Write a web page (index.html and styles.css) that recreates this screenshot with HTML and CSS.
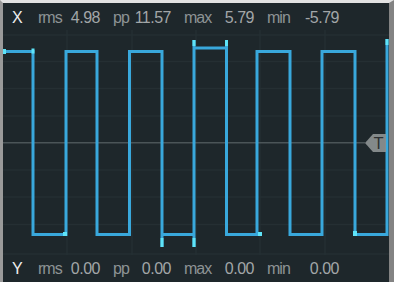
FILE: index.html
```html
<!DOCTYPE html>
<html lang="en">
<head>
    <meta charset="UTF-8">
    <meta name="viewport" content="width=device-width, initial-scale=1.0">
    <title>Scope</title>
    <link rel="stylesheet" href="styles.css">
</head>
<body>

    <div class="scope">
        <!-- X channel measurements -->
        <div class="stats">
            <span class="axis">X</span>
            <span class="label">rms</span><span class="value">4.98</span>
            <span class="label pad">pp</span><span class="value">11.57</span>
            <span class="label pad">max</span><span class="value">5.79</span>
            <span class="label pad">min</span><span class="value">-5.79</span>
        </div>

        <div class="plot">
            <svg width="386" height="225" viewBox="0 0 386 225">
                <g class="grid">
                    <line x1="64" y1="0" x2="64" y2="225"/>
                    <line x1="129" y1="0" x2="129" y2="225"/>
                    <line x1="193" y1="0" x2="193" y2="225"/>
                    <line x1="257" y1="0" x2="257" y2="225"/>
                    <line x1="322" y1="0" x2="322" y2="225"/>
                    <line x1="0" y1="5" x2="386" y2="5"/>
                    <line x1="0" y1="31.5" x2="386" y2="31.5"/>
                    <line x1="0" y1="58.5" x2="386" y2="58.5"/>
                    <line x1="0" y1="86" x2="386" y2="86"/>
                    <line x1="0" y1="140" x2="386" y2="140"/>
                    <line x1="0" y1="167" x2="386" y2="167"/>
                    <line x1="0" y1="194.5" x2="386" y2="194.5"/>
                    <line x1="0" y1="224" x2="386" y2="224"/>
                </g>
                <line class="center" x1="0" y1="112.75" x2="362" y2="112.75"/>

                <path class="trace" d="M1 21.5 H30 V204.5 H63 V21.5 H94 V204.5 H126.5 V21.5 H159 V217
                    M159 204.5 H191 M191 217 V10 M191 18 H223.5 M223.5 10 V204.5 H254 V21.5 H287 V204.5 H319 V21.5 H352 V204.5 H384 V9"/>

                <!-- trigger marker -->
                <polygon class="trigger" points="362,113 370,104 383,104 383,122 370,122"/>
                <text class="trigger-text" x="375.5" y="119">T</text>

                <g class="glint">
                    <rect x="0" y="19" width="3" height="5"/>
                    <rect x="28.5" y="18.5" width="3" height="5"/>
                    <rect x="157.5" y="208" width="3" height="9"/>
                    <rect x="189.5" y="208" width="3" height="9"/>
                    <rect x="189.5" y="10" width="3" height="6"/>
                    <rect x="222" y="10" width="3" height="6"/>
                    <rect x="60" y="202" width="4" height="4"/>
                    <rect x="255" y="202" width="4" height="4"/>
                    <rect x="350" y="201" width="4" height="5"/>
                    <rect x="382.5" y="9" width="3" height="6"/>
                </g>
            </svg>
        </div>

        <!-- Y channel measurements -->
        <div class="stats">
            <span class="axis">Y</span>
            <span class="label">rms</span><span class="value">0.00</span>
            <span class="label pad">pp</span><span class="value">0.00</span>
            <span class="label pad">max</span><span class="value">0.00</span>
            <span class="label pad">min</span><span class="value">0.00</span>
        </div>
    </div>

</body>
</html>
```

FILE: styles.css
```css
body {
    margin: 0;
    background-color: #1e272b;
    font-family: "Liberation Sans", Arial, sans-serif;
}
.scope {
    width: 394px;
    height: 282px;
    box-sizing: border-box;
    border-top: 3px solid #e2e2e2;
    border-left: 3px solid #9a9a9a;
    border-right: 5px solid #838383;
    display: flex;
    flex-direction: column;
}
.stats {
    height: 27px;
    display: grid;
    grid-template-columns: 26px 24px 38px 34px 37px 44px 39px 36px 49px;
    align-items: center;
    padding-left: 9px;
    padding-top: 3px;
    box-sizing: border-box;
    font-size: 16px;
    color: #8d9395;
}
.stats:last-child {
    padding-top: 0;
}
.axis {
    color: #eeeeee;
}
.label {
    letter-spacing: -1px;
}
.pad {
    padding-left: 13px;
}
.value {
    text-align: right;
    letter-spacing: -0.5px;
    color: #a2a6a8;
}
.plot {
    height: 225px;
}
.plot svg {
    display: block;
}
.grid line {
    stroke: #252f33;
    stroke-width: 1.5;
}
.center {
    stroke: #4b5558;
    stroke-width: 1.5;
}
.trigger {
    fill: #8c9193;
    opacity: 0.92;
}
.trigger-text {
    font-family: "DejaVu Sans", sans-serif;
    font-size: 15px;
    fill: #2b2f31;
    text-anchor: middle;
}
.trace {
    fill: none;
    stroke: #39a8dc;
    stroke-width: 3;
}
.glint rect {
    fill: #5fe4f8;
}
```
